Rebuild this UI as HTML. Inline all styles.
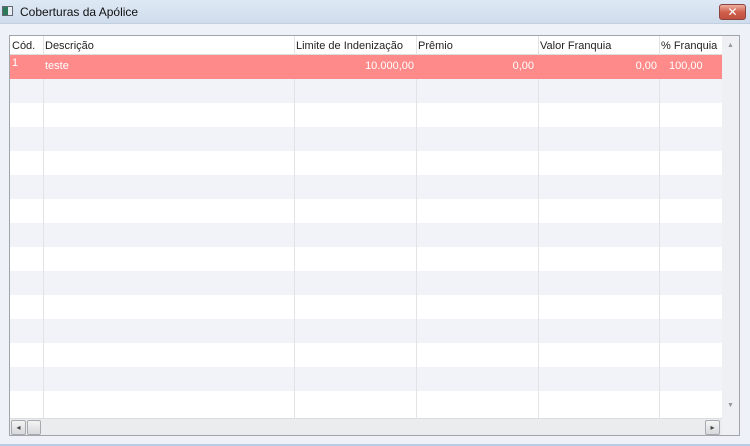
<!DOCTYPE html>
<html><head><meta charset="utf-8"><style>
*{margin:0;padding:0;box-sizing:border-box}
body{width:750px;height:446px;overflow:hidden;background:#eef1f7;font-family:"Liberation Sans","DejaVu Sans",sans-serif;font-size:11px;position:relative;color:#1a1a1a}
.title{position:absolute;left:0;top:0;width:750px;height:24px;background:linear-gradient(#dfe9f5,#cfdcec);border-bottom:1px solid #c2cfe0}
.title span{position:absolute;left:20px;top:5px;font-size:12px;color:#111}
.ico{position:absolute;left:2px;top:6px;width:11px;height:10px;border:1px solid #667;background:linear-gradient(90deg,#2c7a5a 0 5px,#e8eef0 5px)}
.close{position:absolute;left:719px;top:4px;width:27px;height:16px;border:1px solid #8a4540;border-radius:3px;background:linear-gradient(#eeb0a0,#d0604c 50%,#c0503e);color:#fff;font-weight:bold;text-align:center;font-size:12px;line-height:14px}
.grid{position:absolute;left:9px;top:35px;width:731px;height:401px;border:1px solid #a0a4ab;background:#fff;overflow:hidden}
.hdr{position:absolute;left:0;top:0;width:712px;height:19px;background:#fff;border-bottom:1px solid #dcdde0}
.hdr div,.row div{position:absolute;top:0;height:100%;white-space:nowrap}
.hdr div{top:4px;color:#222}
.row{position:absolute;left:0;width:712px;height:24px}
.alt{background:#f1f3f8}
.sel{background:#ff8a8a;color:#fff}
.sel div{top:5px}
.vl{position:absolute;top:19px;width:1px;height:363px;background:#e2e3e6}
.vs{position:absolute;left:712px;top:0;width:17px;height:382px;background:#eef0f3}
.hs{position:absolute;left:0;top:382px;width:712px;height:17px;background:#ebecee;border-top:1px solid #dcdde0}
.btn{position:absolute;top:1px;width:15px;height:15px;border:1px solid #a8aab0;border-radius:2px;background:linear-gradient(#f4f4f4,#d8d9dc);font-size:8px;text-align:center;line-height:13px;color:#444}
.corner{position:absolute;left:712px;top:382px;width:17px;height:17px;background:#eef0f3}
.bottom{position:absolute;left:0;top:444px;width:750px;height:2px;background:#b8cde4}
</style></head><body>
<div class="title"><div class="ico"></div><span>Coberturas da Apólice</span><div class="close">✕</div></div>
<div class="grid">
<div class="hdr">
<div style="left:2px">Cód.</div><div style="left:35px">Descrição</div><div style="left:286px">Limite de Indenização</div><div style="left:408px">Prêmio</div><div style="left:530px">Valor Franquia</div><div style="left:651px">% Franquia</div>
</div>
<div class="row sel" style="top:19px">
<div style="left:2px;top:2px">1</div><div style="left:35px">teste</div>
<div style="left:285px;width:119px;text-align:right">10.000,00</div>
<div style="left:407px;width:117px;text-align:right">0,00</div>
<div style="left:529px;width:118px;text-align:right">0,00</div>
<div style="left:659px">100,00</div>
</div>
<div class="row alt" style="top:43px"></div>
<div class="row alt" style="top:91px"></div>
<div class="row alt" style="top:139px"></div>
<div class="row alt" style="top:187px"></div>
<div class="row alt" style="top:235px"></div>
<div class="row alt" style="top:283px"></div>
<div class="row alt" style="top:331px"></div>
<div class="vl" style="left:33px;top:43px;height:339px"></div>
<div class="vl" style="left:284px;top:0;height:19px"></div><div class="vl" style="left:284px;top:43px;height:339px"></div>
<div class="vl" style="left:406px;top:0;height:19px"></div><div class="vl" style="left:406px;top:43px;height:339px"></div>
<div class="vl" style="left:528px;top:0;height:19px"></div><div class="vl" style="left:528px;top:43px;height:339px"></div>
<div class="vl" style="left:649px;top:0;height:19px"></div><div class="vl" style="left:649px;top:43px;height:339px"></div>
<div class="vl" style="left:33px;top:0;height:19px"></div>
<div class="vs"><div style="position:absolute;left:5px;top:6px;font-size:7px;color:#999">▲</div><div style="position:absolute;left:5px;top:366px;font-size:7px;color:#999">▼</div></div>
<div class="hs"><div class="btn" style="left:1px">◂</div><div class="btn" style="left:17px;width:14px"></div><div class="btn" style="left:695px">▸</div></div>
<div class="corner"></div>
</div>
<div class="bottom"></div>
</body></html>
